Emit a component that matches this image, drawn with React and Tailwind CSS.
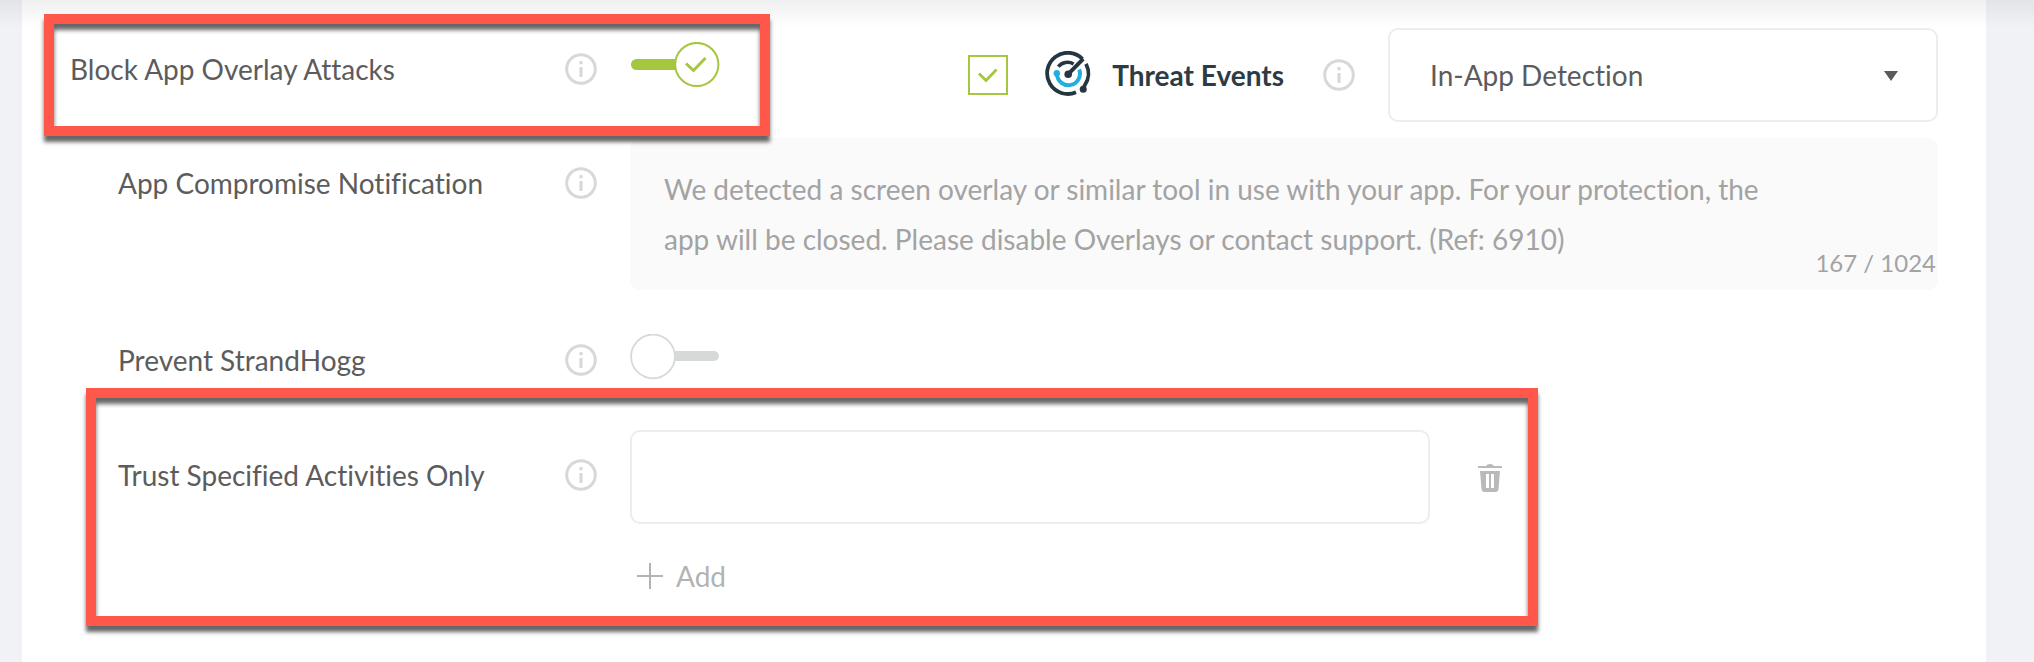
import { useState } from "react";

function InfoIcon() {
  return (
    <svg viewBox="0 0 32 32" className="size-8 shrink-0" fill="none" aria-hidden="true">
      <circle cx="16" cy="16" r="14.3" stroke="#d7d9d9" strokeWidth="3" />
      <rect x="14.4" y="14" width="3.2" height="10" rx="1" fill="#d7d9d9" />
      <rect x="14.3" y="8" width="3.4" height="3.2" rx="1" fill="#d7d9d9" />
    </svg>
  );
}

function Toggle({ id, on, onChange }) {
  return (
    <span className="relative mt-[19px] block h-[46px] w-[90px] shrink-0">
      <input
        id={id}
        type="checkbox"
        role="switch"
        checked={on}
        onChange={(e) => onChange(e.target.checked)}
        className="absolute inset-0 z-10 size-full cursor-pointer opacity-0"
      />
      <svg viewBox="0 0 90 46" className="h-[46px] w-[90px]" fill="none" aria-hidden="true">
        {on ? (
          <>
            <rect x="1" y="17" width="60" height="11" rx="5.5" fill="#a5c63f" />
            <circle cx="66.8" cy="22.5" r="21.6" fill="#fff" stroke="#a5c63f" strokeWidth="2" />
            <path d="M56 21.5l7.500 7L75.500 16" stroke="#a5c63f" strokeWidth="3" />
          </>
        ) : (
          <>
            <rect x="30" y="17" width="59" height="10" rx="5" fill="#d7d9d9" />
            <circle cx="23" cy="22.500" r="21.9" fill="#fff" stroke="#d7d9d9" strokeWidth="1.8" />
          </>
        )}
      </svg>
    </span>
  );
}

function ThreatLogo() {
  return (
    <svg viewBox="0 0 48 48" className="size-12 shrink-0" fill="none" aria-hidden="true">
      <path d="M38.500 8A20.600 20.600 0 1 0 32 41.200" stroke="#263640" strokeWidth="3.800" />
      <path d="M42 12.900A20.600 20.600 0 0 1 40.800 34.200L39 38" stroke="#263640" strokeWidth="3.800" />
      <circle cx="39.200" cy="38.200" r="3.500" fill="#263640" />
      <path d="M13 23.300A11.500 11.500 0 1 0 35.200 18.500" stroke="#22aee0" strokeWidth="4" />
      <circle cx="12.800" cy="22.300" r="3.200" fill="#22aee0" />
      <path d="M14.300 15.600A12 12 0 0 1 29.600 13" stroke="#263640" strokeWidth="3.600" />
      <path d="M24.200 23.200L39.200 7.800" stroke="#263640" strokeWidth="4" />
      <circle cx="24.200" cy="23.200" r="3.800" fill="#263640" />
    </svg>
  );
}

function Row({ label, htmlFor, nested, className = "", children }) {
  return (
    <div className={`flex items-start ${className}`}>
      <div className={`flex w-[527px] shrink-0 items-center justify-between ${nested ? "h-[90px] pl-12" : "h-[92px]"}`}>
        <label htmlFor={htmlFor}>{label}</label>
        <InfoIcon />
      </div>
      <div className="ml-[33px] flex min-w-0 grow items-start">{children}</div>
    </div>
  );
}

const frame =
  "pointer-events-none absolute z-20 border-10 border-[#ff574a] shadow-[0_6px_4px_rgba(0,0,0,0.6),inset_0_6px_4px_rgba(0,0,0,0.6)]";

export default function App() {
  const [block, setBlock] = useState(true);
  const [prevent, setPrevent] = useState(false);
  const [events, setEvents] = useState(true);
  const [activity, setActivity] = useState("");

  return (
    <div className="relative min-h-screen bg-[#f0f2f6] pr-12 pl-[22px] font-['Lato',sans-serif] text-[28px] leading-9 text-[#5c5c5c] [font-variant-ligatures:none]">
      <div className="pointer-events-none absolute inset-x-0 top-0 h-7 bg-linear-to-b from-black/6 to-transparent" />
      <main className="min-h-screen bg-white px-12 pt-[23px]">
        <section className="relative">
          <div className={`${frame} -top-[9px] -left-[26px] h-[122px] w-[726px]`} />
          <Row label="Block App Overlay Attacks" htmlFor="block">
            <Toggle id="block" on={block} onChange={setBlock} />
            <div className="mt-[5px] ml-auto flex items-center">
              <span className="relative block size-10">
                <input
                  id="events"
                  type="checkbox"
                  checked={events}
                  onChange={(e) => setEvents(e.target.checked)}
                  className="block size-10 appearance-none border-2 border-[#a5c63f] bg-white"
                />
                {events && (
                  <svg viewBox="0 0 40 40" className="pointer-events-none absolute inset-0" fill="none" aria-hidden="true">
                    <path d="M11 18.500l7 7L28.500 14.500" stroke="#a5c63f" strokeWidth="2.800" />
                  </svg>
                )}
              </span>
              <label htmlFor="events" className="ml-9 flex items-center gap-5 font-bold text-[#2d3b44]">
                <ThreatLogo />
                Threat Events
              </label>
              <span className="ml-[39px]">
                <InfoIcon />
              </span>
              <span className="relative ml-[33px] block">
                <select
                  aria-label="Detection mode"
                  className="block h-[94px] w-[550px] appearance-none rounded-[10px] border-2 border-[#e9eef2] bg-white px-10"
                >
                  <option>In-App Detection</option>
                </select>
                <svg viewBox="0 0 14 12" className="pointer-events-none absolute top-[42px] right-10 h-3 w-3.5" aria-hidden="true">
                  <path d="M0 1h14L7 11z" fill="#5c5c5c" />
                </svg>
              </span>
            </div>
          </Row>
        </section>

        <Row label="App Compromise Notification" htmlFor="message" nested className="mt-4">
          <div className="relative grow">
            <textarea
              id="message"
              readOnly
              className="block h-[152px] w-full resize-none rounded-[10px] bg-[#fafafa] py-[26px] pr-40 pl-[34px] leading-[50px] text-[#a3a3a3] outline-none"
              value="We detected a screen overlay or similar tool in use with your app. For your protection, the app will be closed. Please disable Overlays or contact support. (Ref: 6910)"
            />
            <span className="absolute right-0.5 bottom-[11px] text-2xl text-[#a3a3a3]">167 / 1024</span>
          </div>
        </Row>

        <Row label="Prevent StrandHogg" htmlFor="prevent" nested className="mt-[25px]">
          <Toggle id="prevent" on={prevent} onChange={setPrevent} />
        </Row>

        <section className="relative mt-[25px]">
          <div className={`${frame} -top-[42px] left-4 h-[238px] w-[1452px]`} />
          <Row label="Trust Specified Activities Only" htmlFor="activity" nested>
            <div className="w-[800px]">
              <input
                id="activity"
                type="text"
                value={activity}
                onChange={(e) => setActivity(e.target.value)}
                className="block h-[94px] w-full rounded-[10px] border-2 border-[#e9eef2] bg-white px-8 outline-none"
              />
              <button type="button" className="mt-7 flex h-12 items-center gap-3 pl-1.5 text-[#b3b3b3]">
                <svg viewBox="0 0 28 28" className="size-7" stroke="#b3b3b3" strokeWidth="2" aria-hidden="true">
                  <path d="M14 1v26M1 14h26" />
                </svg>
                Add
              </button>
            </div>
            <button type="button" aria-label="Delete activity" className="mt-[34px] ml-12">
              <svg viewBox="0 0 24 28" className="h-7 w-6" fill="#b9b9b9" aria-hidden="true">
                <path d="M0 2h8q1-2 4-2t4 2h8v2H0z" />
                <path fillRule="evenodd" d="M2 7h20l-1.500 18q-.3 3-3 3h-11q-2.700 0-3-3zM8 10v14h3V10zM13 10v14h3V10z" />
              </svg>
            </button>
          </Row>
        </section>
      </main>
    </div>
  );
}
